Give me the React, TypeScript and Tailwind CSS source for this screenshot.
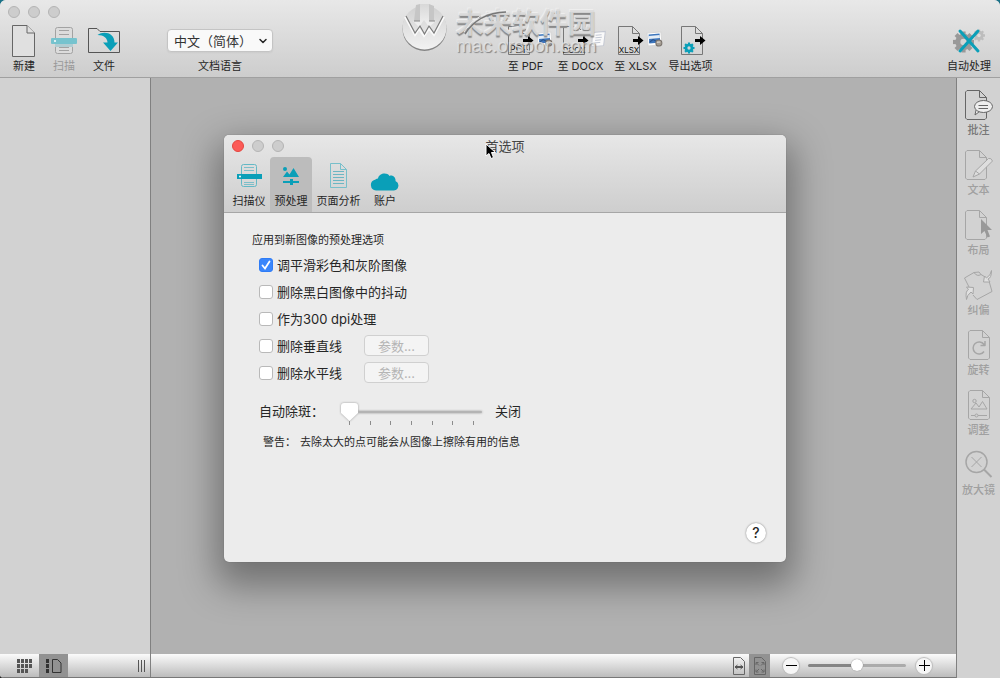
import { useState, type ReactNode } from 'react';
import { ChevronDown } from 'lucide-react';

const TEAL = '#0a9fb8';

// Page outline with a folded corner, shared by most of the icons
function PageShape({ x, y, w, h, fold = 7, rounded = false }: { x: number; y: number; w: number; h: number; fold?: number; rounded?: boolean }) {
  const r = rounded ? 1.5 : 0;
  return (
    <>
      <path
        d={`M${x + r} ${y}H${x + w - fold}L${x + w} ${y + fold}V${y + h - r}L${x + w - r} ${y + h}H${x + r}L${x} ${y + h - r}V${y + r}Z`}
      />
      <path d={`M${x + w - fold} ${y}V${y + fold}H${x + w}`} />
    </>
  );
}

function Gear({ cx, cy, r, color, hole }: { cx: number; cy: number; r: number; color: string; hole: string }) {
  return (
    <g stroke="none">
      <circle cx={cx} cy={cy} r={r * 0.78} fill={color} />
      {[0, 45, 90, 135].map((angle) => (
        <rect
          key={angle}
          x={cx - r * 0.2}
          y={cy - r}
          width={r * 0.4}
          height={r * 2}
          fill={color}
          transform={`rotate(${angle} ${cx} ${cy})`}
        />
      ))}
      <circle cx={cx} cy={cy} r={r * 0.3} fill={hole} />
    </g>
  );
}

function NewIcon() {
  return (
    <svg width="24" height="32" viewBox="0 0 24 32" fill="#e0e0e0" stroke="#666" strokeWidth="1">
      <PageShape x={0.5} y={0.5} w={22} h={31} fold={7.5} />
    </svg>
  );
}

function ScanIcon() {
  return (
    <svg width="26" height="28" viewBox="0 0 26 28" fill="none" stroke="#a2a2a2">
      <rect x="4.5" y="0.5" width="17" height="26" rx="2" fill="#dcdcdc" />
      <path d="M8 3.5H18M8 7.5H18M8 20.5H18M8 23.5H18" />
      <rect x="4" y="17" width="18" height="3" fill="#b0cdd2" stroke="none" />
      <rect x="0" y="11" width="26" height="6" rx="1" fill="#76c3ce" stroke="none" />
      <circle cx="4" cy="14" r="1" fill="#fff" stroke="none" />
    </svg>
  );
}

function FileIcon() {
  return (
    <svg width="32" height="26" viewBox="0 0 32 26" fill="none" stroke="#555">
      <path d="M0.5 24.5V0.5H9L12 3.5H31.5V24.5Z" />
      <path d="M9.5 7C16 2.500 26.500 5 26.500 14.500H30L22.500 23L15 14.500H19.500C19.500 10.500 16 7 9.500 7Z" fill={TEAL} stroke="none" />
    </svg>
  );
}

function FormatIcon({ format }: { format: string }) {
  return (
    <svg width="54" height="32" viewBox="0 0 54 32" fill="none" stroke="#777">
      <PageShape x={9.5} y={1.5} w={21} h={28} fold={7} />
      <path d="M24 14H29V11L34.5 15.5L29 20V17H24Z" fill="#000" stroke="none" />
      <text x="20" y="28" textAnchor="middle" fontSize={format === 'PDF' ? 10 : 8} fill="#111" stroke="none" className="font-['Inter','Liberation_Sans',sans-serif] font-normal">
        {format}
      </text>
      <g transform="rotate(-5 45 14)">
        {format === 'DOCX' ? (
          <>
            <path d="M39 8L42 7H52L49 21H37Z" fill="#fafafa" stroke="#c4c8d2" />
            <path d="M42 10H48M41.500 12.500H48M41 15H47M40 17.500H46" stroke="#b7bccb" strokeWidth="0.8" />
          </>
        ) : (
          <>
            <rect x="38.500" y="7.500" width="14" height="13" fill="#fff" stroke="#d5d5d5" />
            <rect x="40" y="9" width="11" height="9" fill="#3d76bd" stroke="none" />
            <path d="M40 12H51" stroke="#e4edf6" strokeWidth="3" />
            <path d="M40 17L44 14.500L48 17" stroke="#274f86" />
            <circle cx="49.500" cy="18.500" r="3" fill="#a39b91" stroke="#77706a" />
            <path d="M47.500 17.500H51" stroke="#e6e1da" />
          </>
        )}
      </g>
    </svg>
  );
}

function ExportOptionsIcon() {
  return (
    <svg width="54" height="32" viewBox="-6 0 54 32" fill="none" stroke="#777">
      <PageShape x={11.5} y={1.5} w={21} h={28} fold={7} />
      <path d="M25 14H30V11L35.5 15.5L30 20V17H25Z" fill="#000" stroke="none" />
      <Gear cx={19} cy={23} r={5.5} color={TEAL} hole="#d5d5d5" />
    </svg>
  );
}

function AutoIcon() {
  return (
    <svg width="32" height="26" viewBox="0 0 32 26">
      <Gear cx={10.5} cy={14} r={10.5} color="#999" hole="#d4d4d4" />
      <Gear cx={26} cy={7.5} r={6} color="#bdbdbd" hole="#dcdcdc" />
      <path d="M7 3L25 23M25 3L7 23" stroke={TEAL} strokeWidth="3" strokeLinecap="round" />
    </svg>
  );
}

function RailIcon({ name }: { name: string }) {
  const color = name === 'note' ? '#666' : '#a6a6a6';
  return (
    <svg width="30" height="32" viewBox="0 0 30 32" fill="none" stroke={color} strokeLinejoin="round">
      {name === 'note' && (
        <>
          <PageShape x={1.5} y={1.5} w={21} h={29} rounded />
          <path d="M12 21L11 26L15.5 22.5" fill="#eee" />
          <ellipse cx="19.5" cy="17.5" rx="9" ry="6" fill="#eee" />
          <path d="M14.5 16.5H24M14.5 19.5H24" />
        </>
      )}
      {name === 'text' && (
        <>
          <PageShape x={1.5} y={1.5} w={21} h={29} rounded />
          <path d="M9 28L11.500 22L24.500 9.500Q27 8.500 28.500 12L15.500 25Z" fill="#dedede" />
          <path d="M11.5 22L15.5 25" />
        </>
      )}
      {name === 'layout' && (
        <>
          <PageShape x={1.5} y={1.5} w={21} h={29} rounded />
          <path d="M17 10V25L20.5 22L23.5 28.5L26 27.5L23.5 21H28Z" fill="#999" stroke="none" />
        </>
      )}
      {name === 'deskew' && (
        <>
          <path d="M10 3.5L0.5 9L5 18M17 5.5L22 8.5M25 12L28 22.5L13 30.5L9 26M10 3.5Q13 8 17 5.5L15 3Z" />
          <path d="M27.5 1.5Q27.5 9 24 10L26 13L19.5 13L20.5 7L22.5 9Q27 6 27.5 1.5Z" fill="#e0e0e0" />
          <path d="M2.5 30.5Q1 22 4.5 20.5L2.5 18L9.5 18.5L9 25L7 23Q3 26 2.5 30.5Z" fill="#e0e0e0" />
        </>
      )}
      {name === 'rotate' && (
        <>
          <PageShape x={4.5} y={1.5} w={21} h={29} rounded />
          <path d="M20 22.5A6 6 0 1 1 20 15.5M21 12V16.5H16.5" strokeWidth="1.5" />
        </>
      )}
      {name === 'adjust' && (
        <>
          <PageShape x={4.5} y={1.5} w={21} h={29} rounded />
          <circle cx="10.5" cy="12" r="1.7" />
          <path d="M7 20L12 14L15 18L18.5 12.5L23 20ZM7 26.5H11M14 26.5H23" />
          <circle cx="12.5" cy="26.5" r="1.5" />
        </>
      )}
      {name === 'magnifier' && (
        <>
          <circle cx="12.5" cy="13" r="10.5" strokeWidth="1.5" />
          <path d="M7.5 8L17.5 18M17.5 8L7.5 18" />
          <path d="M20 20.5L27.5 28" strokeWidth="2" />
        </>
      )}
    </svg>
  );
}

function TabIcon({ name }: { name: string }) {
  if (name === 'scanner') {
    return (
      <svg width="26" height="24" viewBox="0 0 26 24" fill="none" stroke="#63b8c5">
        <rect x="5.500" y="0.5" width="15" height="22" rx="2" />
        <path d="M8 3.5H18M8 6.5H18M8 18.5H18M8 20.5H18" strokeWidth="0.8" />
        <rect x="1" y="10" width="25" height="5" fill={TEAL} stroke="none" />
        <circle cx="4" cy="12.500" r="1" fill="#fff" stroke="none" />
      </svg>
    );
  }
  if (name === 'preprocess') {
    return (
      <svg width="18" height="20" viewBox="0 0 18 20" fill={TEAL}>
        <circle cx="3" cy="3" r="2" />
        <path d="M1 11L5 5.5L7.5 8.5L11.5 2L17 11Z" />
        <path d="M1 15H17V17H1Z" />
        <rect x="8" y="13" width="3" height="6" />
      </svg>
    );
  }
  if (name === 'analysis') {
    return (
      <svg width="18" height="26" viewBox="0 0 18 26" fill="none" stroke="#78bfca">
        <PageShape x={0.5} y={0.5} w={16} h={24} fold={6} />
        <path d="M3 8.500H14M3 11.500H14M3 14.500H14M3 17.500H14M3 20.500H14" stroke="#6cb6c3" />
      </svg>
    );
  }
  return (
    <svg width="30" height="18" viewBox="0 0 30 18" fill={TEAL}>
      <path d="M6 17.5A5.5 5.5 0 0 1 5 6.7Q7 5.5 8 5.5C9 0 17 -1 19.5 3C22.5 1.5 26 4.5 25.5 8A5 5 0 0 1 24 17.5Z" />
    </svg>
  );
}

function Watermark() {
  return (
    <div className="pointer-events-none absolute top-1 left-[402px] flex gap-2" aria-hidden="true">
      <svg width="46" height="48" viewBox="0 0 46 48">
        <defs>
          <linearGradient id="disc" x1="0" y1="0" x2="0" y2="1">
            <stop offset="0" stopColor="#d0d0d0" />
            <stop offset="1" stopColor="#f2f2f2" />
          </linearGradient>
          <linearGradient id="stem" x1="0" y1="0" x2="0" y2="1">
            <stop offset="0" stopColor="#d8d8d8" />
            <stop offset="1" stopColor="#f2f2f2" />
          </linearGradient>
        </defs>
        <circle cx="22.500" cy="25" r="22" fill="#858585" />
        <circle cx="22.500" cy="23.500" r="22" fill="url(#disc)" />
        <path d="M14 1L18 0V17H12M27 0L32 2V17H27" fill="#c6c6c6" />
        <path d="M18 0H27V17H34L27 23L22 16L17 23L11 17H18Z" fill="url(#stem)" />
        <path d="M12 17H18M27 17H33" stroke="#8a8a8a" />
        <path d="M3 13L13 31L17 25L22 32L27 25L32 31L42 13" stroke="#fafafa" strokeWidth="2" fill="none" />
        <path d="M4 12L13 29L18 22L22.500 30L27 22L32 29L41 12" stroke="#7c7c7c" strokeWidth="1.2" fill="none" />
      </svg>
      <div className="relative pt-1 text-[#dcdcdc]/90">
        <p className="text-[28px] leading-[30px] font-bold [text-shadow:0_2px_1px_#8a8a8a,-1px_-1px_0_#eee]">未来软件园</p>
        <p className="font-['Liberation_Sans',sans-serif] text-[19px] leading-4 text-[#e6e6e6]/80 [text-shadow:1px_1px_1px_#808080]">mac.orsoon.com</p>
        <svg className="absolute top-1 left-0" width="56" height="32" viewBox="0 0 56 32" fill="none">
          <path d="M9 26Q22 5 50 4" stroke="#777" strokeWidth="1.5" />
          <path d="M8 24Q20 3 50 2" stroke="#eee" />
        </svg>
      </div>
    </div>
  );
}

function WindowDots({ closable = false }: { closable?: boolean }) {
  const grey = 'size-3 rounded-full border border-[#b4b4b4] bg-[#cdcdcd]';
  return (
    <div className="flex gap-2">
      <button aria-label="关闭窗口" className={closable ? 'size-3 rounded-full border border-[#e2463f] bg-[#fc5b57]' : grey} />
      <button aria-label="最小化" className={grey} />
      <button aria-label="缩放" className={grey} />
    </div>
  );
}

function ToolButton({ label, className, children }: { label: string; className: string; children: ReactNode }) {
  return (
    <button className={`flex shrink-0 flex-col items-center text-[11px] leading-4 whitespace-nowrap ${className}`}>
      <span className="flex h-[35px] items-center justify-center">{children}</span>
      {label}
    </button>
  );
}

const rail = [
  { icon: 'note', label: '批注' },
  { icon: 'text', label: '文本' },
  { icon: 'layout', label: '布局' },
  { icon: 'deskew', label: '纠偏' },
  { icon: 'rotate', label: '旋转' },
  { icon: 'adjust', label: '调整' },
  { icon: 'magnifier', label: '放大镜' },
];

const tabs = [
  { icon: 'scanner', label: '扫描仪', width: 'w-[42px]' },
  { icon: 'preprocess', label: '预处理', width: 'w-[42px]' },
  { icon: 'analysis', label: '页面分析', width: 'w-[53px]' },
  { icon: 'account', label: '账户', width: 'w-10' },
];

const options = [
  { id: 'smooth', label: '调平滑彩色和灰阶图像', params: false },
  { id: 'dither', label: '删除黑白图像中的抖动', params: false },
  { id: 'dpi', label: '作为300 dpi处理', params: false },
  { id: 'vertical', label: '删除垂直线', params: true },
  { id: 'horizontal', label: '删除水平线', params: true },
];

function Preferences() {
  const [tab, setTab] = useState('preprocess');
  const [checked, setChecked] = useState<string[]>(['smooth']);

  const toggle = (id: string) => {
    setChecked((list) => (list.includes(id) ? list.filter((item) => item !== id) : [...list, id]));
  };

  return (
    <section
      role="dialog"
      aria-labelledby="prefs-title"
      className="absolute top-[135px] left-[224px] w-[562px] overflow-hidden rounded-[5px] bg-[#ececec] text-[#262626] shadow-[0_0_1px_#555,0_16px_36px_8px_rgba(0,0,0,0.36)]"
    >
      <header className="border-b border-[#a6a6a6] bg-linear-to-b from-[#e7e7e7] to-[#cecece]">
        <div className="grid h-[22px] grid-cols-3 items-center px-2">
          <WindowDots closable />
          <h1 id="prefs-title" className="text-center text-[13px] leading-4 text-[#444]">首选项</h1>
        </div>
        <div role="tablist" className="flex px-1">
          {tabs.map((item) => (
            <button
              key={item.icon}
              role="tab"
              aria-selected={tab === item.icon}
              onClick={() => setTab(item.icon)}
              className={`flex h-[55px] flex-col items-center justify-end rounded-t-[4px] pb-[3px] text-[11px] leading-4 whitespace-nowrap ${item.width} ${tab === item.icon ? 'bg-[#bcbcbc]' : ''}`}
            >
              <span className={`flex h-[34px] ${item.icon === 'account' ? 'items-end pb-0.5' : 'items-center'}`}>
                <TabIcon name={item.icon} />
              </span>
              {item.label}
            </button>
          ))}
        </div>
      </header>

      <div className="px-5 pt-[19px] pb-[19px]">
        <h2 className="pl-2 text-[11px] leading-4">应用到新图像的预处理选项</h2>
        <div className="mt-[3px] pl-[15px]">
          {options.map((option) => (
            <div key={option.id} className="flex h-[27px] items-center">
              <label className="flex w-[105px] items-center gap-1 text-[13px] leading-5 whitespace-nowrap">
                <span className="relative flex shrink-0">
                  <input
                    type="checkbox"
                    checked={checked.includes(option.id)}
                    onChange={() => toggle(option.id)}
                    className="peer size-3.5 appearance-none rounded-[3px] border border-[#b9b9b9] bg-white checked:border-[#2f7cf6] checked:bg-[#3a86fb]"
                  />
                  <svg className="pointer-events-none absolute inset-0 hidden peer-checked:block" width="14" height="14" viewBox="0 0 14 14" fill="none" stroke="#fff" strokeWidth="1.8" strokeLinecap="round">
                    <path d="M3.5 7.5L6 10.5L10.5 3.5" />
                  </svg>
                </span>
                {option.label}
              </label>
              {option.params && (
                <button disabled className="h-[21px] w-[65px] rounded-[4px] border border-[#d0d0d0] bg-[#f4f4f4] text-[13px] leading-4 text-[#b5b5b5]">
                  参数...
                </button>
              )}
            </div>
          ))}
        </div>

        <div className="mt-2.5 flex h-[30px] items-center pl-[15px] text-[13px] leading-5">
          <label htmlFor="despeckle" className="w-[82px]">自动除斑：</label>
          <div className="w-[141px] pt-1.5">
            <input
              id="despeckle"
              type="range"
              min={0}
              max={6}
              defaultValue={0}
              className="block h-[18px] w-full appearance-none bg-transparent drop-shadow-[0_0_1px_#999] [&::-webkit-slider-runnable-track]:h-[2px] [&::-webkit-slider-runnable-track]:rounded-full [&::-webkit-slider-runnable-track]:bg-[#b4b4b4] [&::-webkit-slider-thumb]:mt-[-8px] [&::-webkit-slider-thumb]:h-[18px] [&::-webkit-slider-thumb]:w-[17px] [&::-webkit-slider-thumb]:appearance-none [&::-webkit-slider-thumb]:rounded-[3px] [&::-webkit-slider-thumb]:bg-white [&::-webkit-slider-thumb]:[clip-path:polygon(0_0,100%_0,100%_55%,50%_100%,0_55%)]"
            />
            <div className="flex justify-between px-2">
              {[0, 1, 2, 3, 4, 5, 6].map((tick) => (
                <span key={tick} className="h-1 w-px bg-[#8c8c8c]" />
              ))}
            </div>
          </div>
          <output htmlFor="despeckle" className="ml-[13px]">关闭</output>
        </div>

        <p className="mt-2 flex gap-1 pl-[19px] text-[11px] leading-4">
          <span>警告：</span>
          <span>去除太大的点可能会从图像上擦除有用的信息</span>
        </p>

        <div className="mt-[73px] flex justify-end">
          <button aria-label="帮助" className="size-5 rounded-full bg-white text-sm leading-5 font-medium shadow-[0_0_2px_#777]">?</button>
        </div>
      </div>
    </section>
  );
}

function StatusBar() {
  return (
    <footer className="flex h-6 shrink-0 border-b border-[#777] bg-linear-to-b from-[#fbfbfb] to-[#bcbcbc]">
      <div className="flex w-[151px] items-stretch border-r border-[#808080] pl-2.5">
        <button aria-label="缩略图" className="flex w-[29px] items-center justify-center">
          <svg width="16" height="14" viewBox="0 0 16 14" fill="#555">
            {[0, 5, 10].map((y) => [0, 4, 8, 12].map((x) => (y === 10 && x === 12 ? null : <rect key={`${x}-${y}`} x={x} y={y} width="3" height="4" />)))}
          </svg>
        </button>
        <button aria-label="页面列表" className="flex w-[29px] items-center justify-center bg-[#929292]">
          <svg width="16" height="14" viewBox="0 0 16 14" fill="none" stroke="#333">
            <path d="M0 0H3V4H0ZM0 5H3V9H0ZM0 10H3V14H0Z" fill="#333" stroke="none" />
            <path d="M6.5 0.5H11.5L15 4V13.5H6.5Z" />
          </svg>
        </button>
        <span className="ml-auto flex items-center gap-0.5 pr-[5px]">
          <span className="h-3 w-px bg-[#555]" />
          <span className="h-3 w-px bg-[#555]" />
          <span className="h-3 w-px bg-[#555]" />
        </span>
      </div>
      <div className="flex flex-1 items-center justify-end pr-6">
        <button aria-label="适合宽度" className="flex h-full w-[21px] items-center justify-center">
          <svg width="14" height="18" viewBox="0 0 14 18" fill="none" stroke="#666">
            <path d="M1.5 0.5H8.5L12.5 4.5V17.5H1.5Z" />
            <path d="M5.500 8L3 10L5.500 12M8.500 8L11 10L8.500 12M3 9.500H11M3 10.500H11" stroke="#555" />
          </svg>
        </button>
        <button aria-label="适合页面" className="flex h-full w-[21px] items-center justify-center bg-[#929292]">
          <svg width="14" height="18" viewBox="0 0 14 18" fill="none" stroke="#666">
            <path d="M1.5 0.5H8.5L12.5 4.5V17.5H1.5Z" />
            <path d="M3 8V5.5H5.5M8.5 5.5H11V8M3 12.5V15H5.5M8.5 15H11V12.5M3.5 6L6 8.5M10.5 6L8 8.5M3.5 14.5L6 12M10.5 14.5L8 12" />
          </svg>
        </button>
        <button aria-label="缩小" className="ml-[13px] flex size-4 items-center justify-center rounded-full bg-[#f6f6f6] shadow-[0_0_1px_1px_#bbb]">
          <svg width="11" height="11" viewBox="0 0 11 11" stroke="#000"><path d="M0 5.5H11" /></svg>
        </button>
        <input
          type="range"
          aria-label="缩放比例"
          defaultValue={50}
          className="mr-2.5 ml-[9px] h-3 w-[98px] appearance-none bg-transparent [&::-webkit-slider-runnable-track]:h-[3px] [&::-webkit-slider-runnable-track]:rounded-full [&::-webkit-slider-runnable-track]:bg-linear-to-r [&::-webkit-slider-runnable-track]:from-[#858585] [&::-webkit-slider-runnable-track]:from-50% [&::-webkit-slider-runnable-track]:to-[#ababab] [&::-webkit-slider-runnable-track]:to-50% [&::-webkit-slider-thumb]:mt-[-5px] [&::-webkit-slider-thumb]:size-3 [&::-webkit-slider-thumb]:appearance-none [&::-webkit-slider-thumb]:rounded-full [&::-webkit-slider-thumb]:bg-white [&::-webkit-slider-thumb]:shadow-[0_0_1px_#666]"
        />
        <button aria-label="放大" className="flex size-4 items-center justify-center rounded-full bg-[#f6f6f6] shadow-[0_0_1px_1px_#bbb]">
          <svg width="11" height="11" viewBox="0 0 11 11" stroke="#000"><path d="M0 5.5H11M5.5 0V11" /></svg>
        </button>
      </div>
    </footer>
  );
}

export default function App() {
  return (
    <div className="h-screen bg-linear-to-b from-[#1b7288] to-[#222] font-['Inter','Noto_Sans_CJK_SC',sans-serif]">
      <div className="relative flex h-full flex-col overflow-hidden rounded-t-[6px] rounded-bl-[4px] bg-[#d2d2d2]">
        <header className="shrink-0 border-b border-[#a0a0a0] bg-linear-to-b from-[#e8e8e8] to-[#cdcdcd] pb-[3px] text-[#262626]">
          <div className="flex h-[23px] items-center px-2">
            <WindowDots />
          </div>
          <div className="flex px-1">
            <ToolButton label="新建" className="w-10"><NewIcon /></ToolButton>
            <ToolButton label="扫描" className="w-10 text-[#999]"><ScanIcon /></ToolButton>
            <ToolButton label="文件" className="w-10"><FileIcon /></ToolButton>
            <div className="ml-[43px] flex w-[106px] shrink-0 flex-col items-center">
              <div className="flex h-[35px] w-full items-center">
                <div className="relative w-full">
                  <select
                    id="language"
                    className="block h-[23px] w-full appearance-none rounded-[4px] border border-[#c4c4c4] bg-[#f9f9f9] pl-1.5 text-[13px] leading-5 text-[#333] shadow-xs"
                  >
                    <option>中文（简体）</option>
                  </select>
                  <ChevronDown className="pointer-events-none absolute top-1.5 right-1" size={12} strokeWidth={3} />
                </div>
              </div>
              <label htmlFor="language" className="text-[11px] leading-4">文档语言</label>
            </div>
            <div className="ml-[225px] flex">
              <ToolButton label="至 PDF" className="w-[55px]"><FormatIcon format="PDF" /></ToolButton>
              <ToolButton label="至 DOCX" className="w-[55px]"><FormatIcon format="DOCX" /></ToolButton>
              <ToolButton label="至 XLSX" className="w-[55px]"><FormatIcon format="XLSX" /></ToolButton>
              <ToolButton label="导出选项" className="w-[55px]"><ExportOptionsIcon /></ToolButton>
            </div>
            <ToolButton label="自动处理" className="ml-auto w-[54px]"><AutoIcon /></ToolButton>
          </div>
        </header>

        <div className="flex min-h-0 flex-1">
          <div className="flex min-w-0 flex-1 flex-col">
            <div className="flex min-h-0 flex-1">
              <aside className="w-[151px] shrink-0 border-r border-[#808080] bg-[#d2d2d2]" />
              <main className="flex-1 bg-[#b1b1b1]" />
            </div>
            <StatusBar />
          </div>
          <nav className="flex w-11 shrink-0 flex-col gap-2.5 border-l border-[#808080] bg-[#d2d2d2] pt-2.5">
            {rail.map((item) => (
              <button
                key={item.icon}
                disabled={item.icon !== 'note'}
                className="flex flex-col items-center text-[11px] leading-4 font-medium text-[#777] disabled:text-[#a0a0a0]"
              >
                <span className="flex h-[34px] items-center"><RailIcon name={item.icon} /></span>
                {item.label}
              </button>
            ))}
          </nav>
        </div>

        <Watermark />
        <Preferences />
        <svg className="pointer-events-none absolute top-[143px] left-[485px]" width="12" height="17" viewBox="0 0 12 17" fill="#000" stroke="#fff">
          <path d="M1 1V13L4 10.5L6 15.5L8.5 14.5L6.5 9.5H10.5Z" />
        </svg>
      </div>
    </div>
  );
}
